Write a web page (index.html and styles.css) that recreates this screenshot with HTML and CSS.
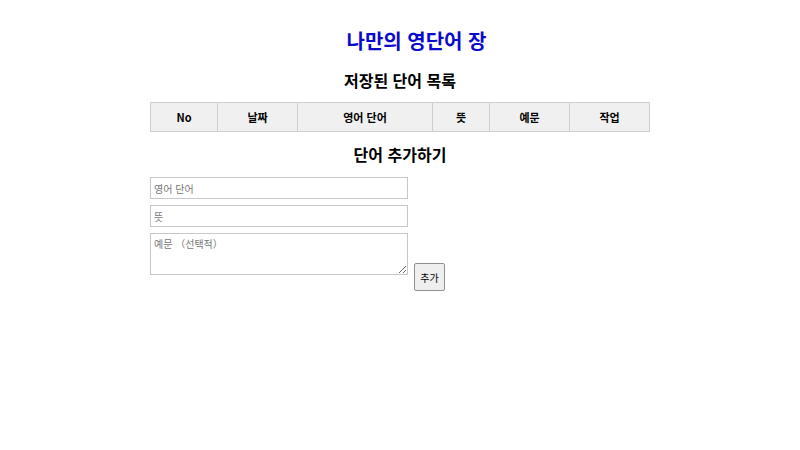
FILE: index.html
```html
<!DOCTYPE html>
<html lang="ko">
<head>
<meta charset="utf-8">
<link rel="stylesheet" href="styles.css">
</head>
<body>
<div class="wrap">
  <h1 class="title">나만의 영단어 장</h1>
  <h2 class="sub">저장된 단어 목록</h2>
  <table class="words">
    <thead>
      <tr>
        <th class="c1">No</th>
        <th class="c2">날짜</th>
        <th class="c3">영어 단어</th>
        <th class="c4">뜻</th>
        <th class="c5">예문</th>
        <th class="c6">작업</th>
      </tr>
    </thead>
  </table>
  <h3 class="sub add">단어 추가하기</h3>
  <form class="form">
    <input class="field" type="text" placeholder="영어 단어">
    <input class="field" type="text" placeholder="뜻">
    <div class="row">
      <textarea class="area" placeholder="예문 （선택적）"></textarea>
      <button class="btn" type="button">추가</button>
    </div>
  </form>
</div>
</body>
</html>
```
FILE: styles.css
```css
html, body {
  margin: 0;
  padding: 0;
  background: #fff;
}
body {
  font-family: "Noto Sans CJK KR", "Noto Sans", sans-serif;
  color: #000;
}
.wrap {
  width: 500px;
  margin: 0 auto;
  padding-top: 29px;
}
.title {
  margin: 0;
  padding-left: 33px;
  font-size: 20px;
  line-height: 24px;
  font-weight: 700;
  color: #0a0acd;
  text-align: center;
}
.sub {
  margin: 17px 0 0;
  font-size: 16px;
  line-height: 20px;
  font-weight: 700;
  text-align: center;
}
.add {
  margin-top: 12px;
}
.words {
  margin-top: 12px;
  width: 500px;
  border-collapse: collapse;
  table-layout: fixed;
}
.words th {
  background: #f0f0f0;
  border: 1px solid #cfcfcf;
  height: 28px;
  padding: 0;
  font-size: 11px;
  font-weight: 700;
  text-align: center;
}
.c1 { width: 66px; }
.c2 { width: 79px; }
.c3 { width: 134px; }
.c4 { width: 56px; }
.c5 { width: 79px; }
.form {
  margin-top: 13px;
  display: flex;
  flex-direction: column;
  gap: 6px;
}
.field, .area {
  box-sizing: border-box;
  width: 258px;
  border: 1px solid #c8c8c8;
  padding: 2px 3px;
  font-family: "Noto Sans CJK KR", "Noto Sans", sans-serif;
  font-size: 10px;
  outline: none;
  margin: 0;
}
.field {
  height: 22px;
}
.area {
  height: 42px;
  resize: vertical;
}
.field::placeholder, .area::placeholder {
  color: #777;
}
.row {
  display: flex;
  align-items: flex-start;
  gap: 6px;
}
.btn {
  margin-top: 30px;
  width: 31px;
  height: 28px;
  padding: 0;
  background: #efefef;
  border: 1px solid #8f8f8f;
  border-radius: 2px;
  font-family: "Noto Sans CJK KR", "Noto Sans", sans-serif;
  font-size: 10px;
  color: #000;
}
```
